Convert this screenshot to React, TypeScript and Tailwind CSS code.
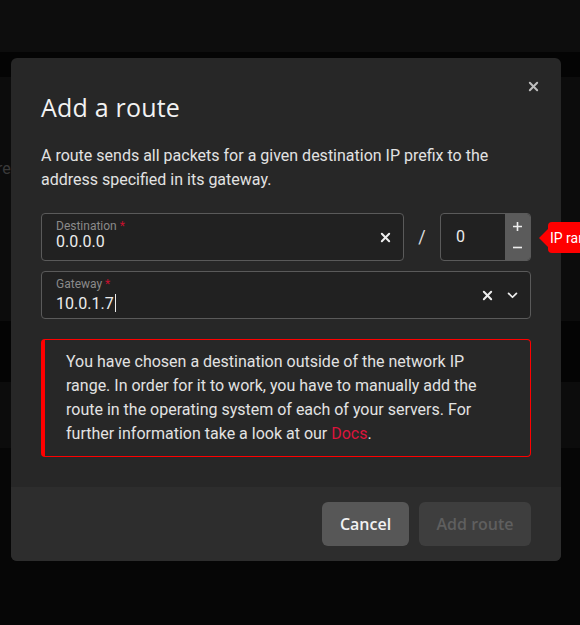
const body = { fontFamily: "Roboto, 'Liberation Sans', sans-serif" };
const head = { fontFamily: "'Open Sans', Lato, sans-serif" };

function Cross({ className }: { className?: string }) {
  return (
    <svg viewBox="0 0 12 12" className={className} fill="none" stroke="currentColor" strokeWidth="2.2" strokeLinecap="round">
      <path d="M2 2l8 8M10 2l-8 8" />
    </svg>
  );
}

function Field({ label, value, caret, children }: { label: string; value: string; caret?: boolean; children?: React.ReactNode }) {
  return (
    <div className="flex h-12 flex-1 items-center rounded border border-[#5a5a5a] bg-[#212121] pl-[14px] pr-3">
      <div className="flex h-full flex-1 flex-col pt-[6px]">
        <span className="text-xs leading-[13px] text-[#8a8a8a]">
          {label} <span className="text-[#c8102e]">*</span>
        </span>
        <span className="text-base leading-[18px] text-[#ececec]">
          {value}
          {caret && <span className="ml-px inline-block h-[18px] w-px translate-y-[3px] bg-[#ececec]" />}
        </span>
      </div>
      {children}
    </div>
  );
}

export default function App() {
  return (
    <div className="relative h-[625px] w-[580px] overflow-hidden bg-[#060606]" style={body}>
      {/* page behind the dialog */}
      <div className="h-[52px] bg-[#0d0d0d]" />
      <div className="h-[25px] bg-[#040404]" />
      <div className="h-[244px] bg-[#0c0c0c] pt-[80px]">
        <span className="ml-[-3px] text-base text-[#3a3a3a]">re</span>
      </div>
      <div className="h-[61px] bg-[#040404]" />
      <div className="h-[66px] bg-[#0c0c0c]" />

      {/* dialog */}
      <div className="absolute left-[11px] top-[58px] w-[550px] rounded-md bg-[#272727]">
        <div className="relative px-[30px] pt-[33px] pb-[30px]">
          <button className="absolute right-[22px] top-[23px] text-[#bdbdbd]">
            <Cross className="h-[11px] w-[11px]" />
          </button>
          <h2 className="text-[25px] leading-8 tracking-[0.2px] text-[#f2f2f2]" style={head}>
            Add a route
          </h2>
          <p className="mt-[21px] text-base leading-6 text-[#e2e2e2]">
            A route sends all packets for a given destination IP prefix to the address specified in its gateway.
          </p>

          <div className="mt-[21px] flex items-center">
            <Field label="Destination" value="0.0.0.0">
              <Cross className="h-[11px] w-[11px] text-[#eeeeee]" />
            </Field>
            <span className="w-9 text-center text-lg text-[#dddddd]">/</span>
            <div className="relative flex h-12 w-[91px] items-stretch rounded border border-[#5a5a5a] bg-[#212121]">
              <span className="flex flex-1 items-center pl-[15px] text-base text-[#ececec]">0</span>
              <div className="flex w-[25px] flex-col items-center justify-center gap-[12px] rounded-r-[3px] bg-[#5b5b5b] text-[#eeeeee]">
                <svg viewBox="0 0 10 10" className="h-[9px] w-[9px]" stroke="currentColor" strokeWidth="1.8">
                  <path d="M5 0v10M0 5h10" />
                </svg>
                <svg viewBox="0 0 10 10" className="h-[9px] w-[9px]" stroke="currentColor" strokeWidth="1.8">
                  <path d="M0 5h10" />
                </svg>
              </div>
              <div className="absolute left-[98px] top-[8px] flex items-center">
                <svg viewBox="0 0 10 20" className="h-5 w-[9px] fill-[#ff0000]">
                  <path d="M0 10L10 0v20z" />
                </svg>
                <div className="flex h-[31px] items-center whitespace-nowrap rounded-l bg-[#ff0000] pl-[2px] pr-3 text-sm text-white">
                  IP range
                </div>
              </div>
            </div>
          </div>

          <div className="mt-[10px] flex">
            <Field label="Gateway" value="10.0.1.7" caret>
              <div className="flex items-center gap-[14px] text-[#eeeeee]">
                <Cross className="h-[11px] w-[11px]" />
                <svg viewBox="0 0 12 8" className="h-[7px] w-[11px]" fill="none" stroke="currentColor" strokeWidth="2" strokeLinecap="round" strokeLinejoin="round">
                  <path d="M1.5 1.5L6 6l4.5-4.5" />
                </svg>
              </div>
            </Field>
          </div>

          <div className="mt-5 rounded border border-l-4 border-[#ff0000] py-[10px] pl-[21px] pr-5 text-base leading-6 text-[#e2e2e2]">
            You have chosen a destination outside of the network IP range. In order for it to work, you have to manually add
            the route in the operating system of each of your servers. For further information take a look at our{" "}
            <a className="text-[#dc143c]">Docs</a>.
          </div>
        </div>

        <div className="flex justify-end gap-[10px] rounded-b-md bg-[#2d2d2d] px-[30px] pb-[15px] pt-[15px]">
          <button className="h-11 w-[87px] rounded-md bg-[#575757] text-base font-semibold text-[#f2f2f2]" style={head}>
            Cancel
          </button>
          <button className="h-11 w-[112px] rounded-md bg-[#3e3e3e] text-base font-semibold text-[#5f5f5f]" style={head}>
            Add route
          </button>
        </div>
      </div>
    </div>
  );
}
